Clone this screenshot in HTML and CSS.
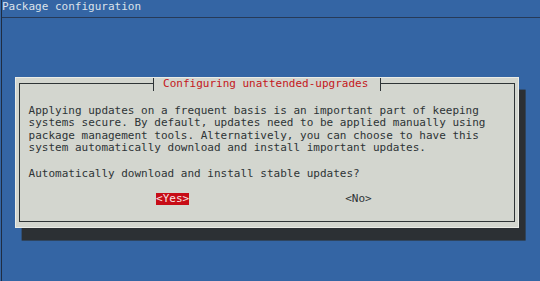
FILE: index.html
```html
<!DOCTYPE html>
<html lang="en">
<head>
    <meta charset="UTF-8">
    <meta name="viewport" content="width=device-width, initial-scale=1.0">
    <title>Package configuration</title>
    <link rel="stylesheet" href="styles.css">
</head>
<body>
    <div class="screen">
        <div class="backtitle">Package configuration</div>
        <div class="dialog">
            <div class="frame">
                <div class="title-row">
                    <span class="title">Configuring unattended-upgrades</span>
                </div>
                <div class="content">
                    <p class="message">Applying updates on a frequent basis is an important part of keeping<br>systems secure. By default, updates need to be applied manually using<br>package management tools. Alternatively, you can choose to have this<br>system automatically download and install important updates.</p>
                    <p class="question">Automatically download and install stable updates?</p>
                    <div class="buttons">
                        <span class="button selected">&lt;Yes&gt;</span>
                        <span class="button">&lt;No&gt;</span>
                    </div>
                </div>
            </div>
        </div>
    </div>
</body>
</html>
```

FILE: styles.css
```css
body {
    background-color: #3465a4;
    font-family: "DejaVu Sans Mono", "Liberation Mono", monospace;
    font-size: 11px;
    line-height: 12.6px;
    margin: 0;
    padding: 0;
    height: 281px;
    overflow: hidden;
}
.screen {
    margin-left: 1px;
    border-left: 1px solid #1f2d42;
    height: 281px;
    padding-top: 1.2px;
    box-sizing: border-box;
}
.backtitle {
    color: #dce2ea;
    height: 16px;
    border-bottom: 1px solid #263a58;
    white-space: pre;
}
.dialog {
    margin-top: 58.6px;
    margin-left: 2ch;
    width: 76ch;
    height: 151.2px;
    box-sizing: border-box;
    background-color: #d3d6cf;
    border: 1px solid #eaece7;
    padding: 5.3px 2.3px 4.8px;
    box-shadow: 1ch 12.6px 0 #2c3034;
}
.frame {
    height: 100%;
    box-sizing: border-box;
    border: 1px solid #2e3436;
}
.title-row {
    display: flex;
    height: 12.6px;
    margin-top: -6px;
}
.title {
    margin-left: 133px;
    padding: 0 12px 0 9.5px;
    background-color: #d3d6cf;
    color: #c4161c;
    border-left: 1px solid #2e3436;
    border-right: 1px solid #2e3436;
    white-space: pre;
}
.content {
    padding: 14px 0 0 9px;
    color: #2e3436;
}
.message, .question {
    margin: 0 0 12.6px;
    white-space: nowrap;
}
.buttons {
    display: flex;
    gap: 156px;
    padding-left: 127.5px;
}
.button {
    white-space: pre;
}
.selected {
    background-color: #c70c16;
    color: #f7e1e1;
}
```
